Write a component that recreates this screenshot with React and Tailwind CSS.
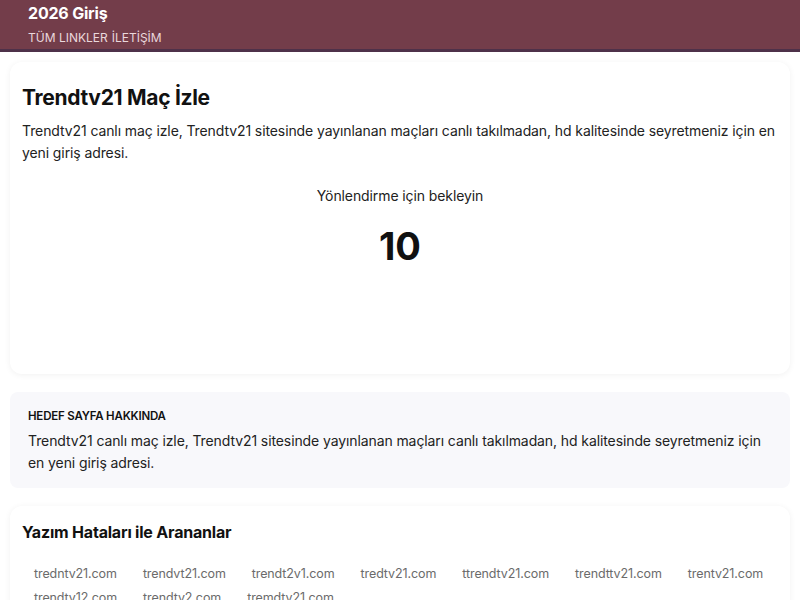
import React from 'react';

const typos = [
  'tredntv21.com',
  'trendvt21.com',
  'trendt2v1.com',
  'tredtv21.com',
  'ttrendtv21.com',
  'trendttv21.com',
  'trentv21.com',
  'trendtv12.com',
  'trendtv2.com',
  'tremdtv21.com',
];

const desc =
  'Trendtv21 canlı maç izle, Trendtv21 sitesinde yayınlanan maçları canlı takılmadan, hd kalitesinde seyretmeniz için en yeni giriş adresi.';

export default function App() {
  return (
    <div className="min-h-screen bg-white text-[#111] font-['Inter','Noto_Sans',sans-serif]">
      {/* header */}
      <header className="bg-[#733d4a] border-b-[3px] border-[#4e3149] h-[52px] px-7 flex flex-col justify-center">
        <div className="text-white text-[16px] font-bold leading-5 tracking-[-0.2px]">2026 Giriş</div>
        <nav className="flex gap-1 text-[12px] text-[#ead8dc] leading-4 mt-[7px]">
          <a>TÜM LINKLER</a>
          <a>İLETİŞİM</a>
        </nav>
      </header>

      <main className="px-[10px] pt-[10px] flex flex-col gap-[18px]">
        {/* redirect card */}
        <section className="bg-white rounded-xl shadow-[0_1px_6px_rgba(0,0,0,0.06)] px-3 pt-[22px] h-[312px]">
          <h1 className="text-[21px] font-bold leading-7 tracking-[-0.3px]">Trendtv21 Maç İzle</h1>
          <p className="text-[14px] leading-[22px] mt-[8px] text-[#222] tracking-[-0.1px]">{desc}</p>
          <div className="text-center mt-[21px]">
            <div className="text-[14px] leading-[22px] text-[#222] tracking-[-0.1px]">Yönlendirme için bekleyin</div>
            <div className="text-[38px] font-bold leading-[48px] mt-[15px]">10</div>
          </div>
        </section>

        {/* about */}
        <section className="bg-[#f8f8fb] rounded-lg px-[18px] pt-[16px] pb-[14px]">
          <div className="text-[11.5px] font-semibold uppercase leading-4 tracking-[-0.2px] text-[#111]">Hedef Sayfa Hakkında</div>
          <p className="text-[14px] leading-[22px] mt-[6px] text-[#222] tracking-[-0.1px]">{desc}</p>
        </section>

        {/* typos */}
        <section className="bg-white rounded-xl shadow-[0_1px_6px_rgba(0,0,0,0.06)] px-3 pt-[14px] pb-4">
          <h2 className="text-[16px] font-bold leading-6 tracking-[-0.2px]">Yazım Hataları ile Arananlar</h2>
          <ul className="flex flex-wrap mt-[20px] gap-y-[4px]">
            {typos.map((t) => (
              <li key={t} className="px-3 mr-[2px] text-[12.5px] leading-5 text-[#6b6b6b] tracking-[-0.1px]">
                {t}
              </li>
            ))}
          </ul>
        </section>
      </main>
    </div>
  );
}
